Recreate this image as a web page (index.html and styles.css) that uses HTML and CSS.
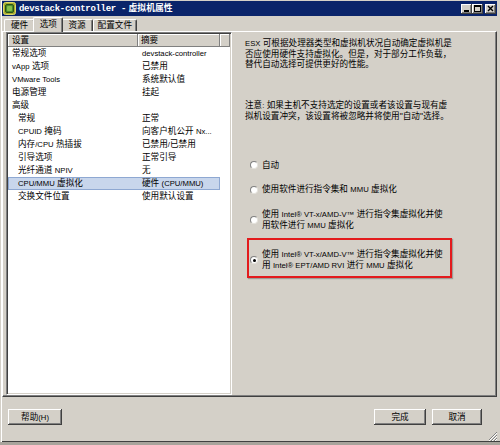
FILE: index.html
```html
<!DOCTYPE html>
<html lang="zh-CN">
<head>
<meta charset="utf-8">
<title>虚拟机属性</title>
<link rel="stylesheet" href="styles.css">
</head>
<body>
<div class="window">
  <div class="titlebar">
    <svg class="appicon" width="13" height="13" viewBox="0 0 13 13">
      <rect x="0.5" y="0.5" width="12" height="12" rx="2" fill="#a9ad2c" stroke="#dcd86a"/>
      <rect x="2.5" y="2.5" width="8" height="8" rx="1.5" fill="#4c8a2a" stroke="#2a5416"/>
      <rect x="4" y="4" width="5" height="5" rx="1" fill="#86c04a"/>
    </svg>
    <span class="title"><span class="tmono">devstack-controller -</span> 虚拟机属性</span>
    <div class="winbtns">
      <span class="wbtn"><svg width="11" height="10" viewBox="0 0 11 10"><rect x="3" y="6" width="5" height="2" fill="#000"/></svg></span>
      <span class="wbtn"><svg width="11" height="10" viewBox="0 0 11 10"><rect x="2.5" y="1.5" width="6" height="6" fill="none" stroke="#000"/><rect x="2" y="1" width="7" height="2" fill="#000"/></svg></span>
      <span class="wbtn wclose"><svg width="11" height="10" viewBox="0 0 11 10"><path d="M3 2 L8 7 M8 2 L3 7" stroke="#000" stroke-width="1.4"/></svg></span>
    </div>
  </div>

  <div class="tabs">
    <div class="tab">硬件</div>
    <div class="tab active">选项</div>
    <div class="tab">资源</div>
    <div class="tab tab-wide">配置文件</div>
  </div>

  <div class="page">
    <div class="list">
      <div class="lhead">
        <div class="hc hc1">设置</div>
        <div class="hc hc2">摘要</div>
        <div class="hc hc3"></div>
      </div>
      <div class="row"><div class="c1">常规选项</div><div class="c2"><span class="e">devstack-controller</span></div></div>
      <div class="row"><div class="c1"><span class="e">vApp</span> 选项</div><div class="c2">已禁用</div></div>
      <div class="row"><div class="c1"><span class="e">VMware Tools</span></div><div class="c2">系统默认值</div></div>
      <div class="row"><div class="c1">电源管理</div><div class="c2">挂起</div></div>
      <div class="row"><div class="c1">高级</div><div class="c2"></div></div>
      <div class="row"><div class="c1 sub">常规</div><div class="c2">正常</div></div>
      <div class="row"><div class="c1 sub"><span class="e">CPUID</span> 掩码</div><div class="c2">向客户机公开 <span class="e">Nx...</span></div></div>
      <div class="row"><div class="c1 sub">内存<span class="e">/CPU</span> 热插拔</div><div class="c2">已禁用<span class="e">/</span>已禁用</div></div>
      <div class="row"><div class="c1 sub">引导选项</div><div class="c2">正常引导</div></div>
      <div class="row"><div class="c1 sub">光纤通道 <span class="e">NPIV</span></div><div class="c2">无</div></div>
      <div class="row sel"><div class="c1 sub"><span class="e">CPU/MMU</span> 虚拟化</div><div class="c2">硬件 <span class="e">(CPU/MMU)</span></div></div>
      <div class="row"><div class="c1 sub">交换文件位置</div><div class="c2">使用默认设置</div></div>
    </div>

    <div class="detail">
      <p class="para"><span class="e">ESX</span> 可根据处理器类型和虚拟机状况自动确定虚拟机是<br>否应使用硬件支持虚拟化。但是，对于部分工作负载，<br>替代自动选择可提供更好的性能。</p>
      <p class="para para-note">注意<span class="e">:</span> 如果主机不支持选定的设置或者该设置与现有虚<br>拟机设置冲突，该设置将被忽略并将使用"自动"选择。</p>

      <div class="opts">
        <div class="opt"><span class="radio"></span><span class="lbl">自动</span></div>
        <div class="opt"><span class="radio"></span><span class="lbl">使用软件进行指令集和 <span class="e">MMU</span> 虚拟化</span></div>
        <div class="opt"><span class="radio"></span><span class="lbl">使用 <span class="e">Intel® VT-x/AMD-V™</span> 进行指令集虚拟化并使<br>用软件进行 <span class="e">MMU</span> 虚拟化</span></div>
        <div class="opt boxed"><span class="radio on"></span><span class="lbl">使用 <span class="e">Intel® VT-x/AMD-V™</span> 进行指令集虚拟化并使<br>用 <span class="e">Intel® EPT/AMD RVI</span> 进行 <span class="e">MMU</span> 虚拟化</span><span class="hl"></span></div>
      </div>
    </div>
  </div>

  <div class="footer">
    <button class="btn btn-help">帮助<span class="e">(H)</span></button>
    <button class="btn btn-ok">完成</button>
    <button class="btn btn-cancel">取消</button>
    <svg class="grip" width="8" height="10" viewBox="0 0 8 10">
      <path d="M8 1 L-1 10 M8 4 L2 10 M8 7 L5 10" stroke="#808080" stroke-width="1"/>
      <path d="M8 2 L0 10 M8 5 L3 10 M8 8 L6 10" stroke="#ffffff" stroke-width="1"/>
    </svg>
  </div>
</div>
<div class="below"></div>
</body>
</html>
```

FILE: styles.css
```css
* {
  box-sizing: border-box;
  margin: 0;
  padding: 0;
}

html, body {
  width: 500px;
  height: 445px;
  overflow: hidden;
}

body {
  background: #d4d0c8;
  font-family: "Liberation Sans", "Noto Sans CJK SC", sans-serif;
  font-size: 8.6px;
  line-height: 10px;
  color: #000;
}

.e {
  font-size: 7.7px;
}

.window {
  height: 442px;
  display: flex;
  flex-direction: column;
  padding: 1px 3px 1px 2px;
  background: #d4d0c8;
  box-shadow: inset 1px 0 0 #d4d0c8, inset 2px 0 0 #ffffff, inset 0 -1px 0 #404040, inset -1px 0 0 #d4d0c8;
}

/* title bar */
.titlebar {
  height: 15px;
  flex: none;
  background: #0a246a;
  display: flex;
  align-items: center;
  color: #fff;
}

.appicon {
  margin-left: 1px;
  flex: none;
}

.title {
  margin-left: 3px;
  font-weight: bold;
  font-size: 8.8px;
  white-space: nowrap;
}

.tmono {
  font-family: "Liberation Mono", monospace;
  font-size: 9px;
  letter-spacing: -0.3px;
}

.winbtns {
  margin-left: auto;
  margin-right: 1px;
  display: flex;
}

.wbtn {
  width: 11px;
  height: 10px;
  display: block;
  background: #d4d0c8;
  box-shadow: inset -1px -1px 0 #404040, inset 1px 1px 0 #ffffff, inset -2px -2px 0 #808080;
}

.wbtn svg {
  display: block;
}

.wclose {
  margin-left: 2px;
}

/* tabs */
.tabs {
  height: 14px;
  margin-top: 1px;
  flex: none;
  display: flex;
  align-items: flex-end;
  padding-left: 2px;
}

.tab {
  height: 12px;
  padding: 0 6px;
  line-height: 11px;
  white-space: nowrap;
  border-top: 1px solid #ffffff;
  border-left: 1px solid #ffffff;
  border-right: 1px solid #404040;
  border-radius: 2px 2px 0 0;
  box-shadow: inset -1px 0 0 #808080;
  background: #d4d0c8;
}

.tab-wide {
  padding: 0 4px;
}

.tab.active {
  height: 15px;
  margin: 0 -2px -1px;
  padding: 0 5.5px 2px;
  line-height: 12px;
  position: relative;
  z-index: 1;
}

/* tab page */
.page {
  height: 366px;
  flex: none;
  display: flex;
  border-top: 1px solid #ffffff;
  border-left: 1px solid #ffffff;
  border-right: 1px solid #404040;
  border-bottom: 1px solid #404040;
  box-shadow: inset -1px -1px 0 #808080;
  padding-left: 3px;
  padding-bottom: 1px;
}

.list {
  width: 226px;
  flex: none;
  background: #ffffff;
  border: 1px solid;
  border-color: #808080 #ffffff #ffffff #808080;
  box-shadow: inset 1px 1px 0 #404040, inset -1px -1px 0 #d4d0c8;
  padding: 1px;
  overflow: hidden;
}

.lhead {
  display: flex;
  height: 13px;
  line-height: 13px;
}

.hc {
  background: #d4d0c8;
  box-shadow: inset -1px -1px 0 #808080, inset 1px 1px 0 #ffffff;
  white-space: nowrap;
}

.hc1 {
  width: 130px;
  padding-left: 4px;
}

.hc2 {
  width: 82px;
  padding-left: 3px;
}

.hc3 {
  flex: 1;
}

.row {
  display: flex;
  width: 212px;
  height: 13px;
  line-height: 13px;
  white-space: nowrap;
}

.c1 {
  width: 130px;
  padding-left: 4px;
  overflow: hidden;
}

.c1.sub {
  padding-left: 10px;
}

.c2 {
  width: 82px;
  padding-left: 4px;
  overflow: hidden;
}

.row.sel {
  background: #c8d6ec;
  box-shadow: inset 0 0 0 1px #8ea8d2;
}

/* right detail */
.detail {
  flex: 1;
  padding: 6px 0 0 13px;
  white-space: nowrap;
}

.para-note {
  margin-top: 31px;
}

.opts {
  margin-top: 39px;
  display: flex;
  flex-direction: column;
  gap: 14px;
}

.opt {
  display: flex;
  align-items: center;
  margin-left: 5px;
}

.opt.boxed {
  margin-top: 4px;
  position: relative;
}

.radio {
  width: 8px;
  height: 8px;
  flex: none;
  border-radius: 50%;
  background: #ffffff;
  border: 1px solid;
  border-color: #808080 #e4e2dc #e4e2dc #808080;
  position: relative;
}

.radio.on::after {
  content: "";
  position: absolute;
  left: 1.5px;
  top: 1.5px;
  width: 3px;
  height: 3px;
  border-radius: 50%;
  background: #000;
}

.lbl {
  margin-left: 4px;
}

.hl {
  position: absolute;
  left: -3px;
  top: -11px;
  width: 205px;
  height: 40px;
  border: 2px solid #e31b1d;
  box-shadow: 1px 1px 1px rgba(0, 0, 0, 0.25);
}

/* footer */
.footer {
  flex: 1;
  display: flex;
  align-items: flex-start;
  padding: 12px 0 0 6px;
}

.btn {
  height: 16px;
  font: inherit;
  line-height: 14px;
  background: #d4d0c8;
  border: none;
  color: #000;
  box-shadow: inset -1px -1px 0 #404040, inset 1px 1px 0 #ffffff, inset -2px -2px 0 #808080;
}

.btn-help {
  width: 54px;
}

.btn-ok {
  width: 52px;
  margin-left: auto;
}

.btn-cancel {
  width: 50px;
  margin-left: 6px;
}

.grip {
  align-self: flex-end;
  margin-left: 7px;
  flex: none;
  display: block;
}

.below {
  height: 3px;
  background: #a8a49c;
}
```
